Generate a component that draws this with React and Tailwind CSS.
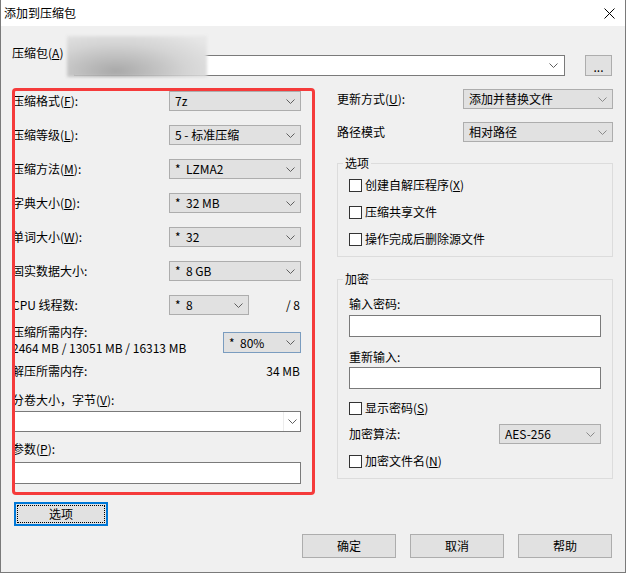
import React from "react";

const Chevron = ({ color = "#5f5f5f" }) => (
  <svg width="9" height="5" viewBox="0 0 9 5" className="shrink-0">
    <path d="M0.5 0.5 L4.5 4.5 L8.5 0.5" fill="none" stroke={color} strokeWidth="1" />
  </svg>
);

const Select = ({ children, className = "", border = "border-[#adadad]", chev }) => (
  <div
    className={`flex items-center justify-between h-[20px] border ${border} bg-[#e1e1e1] pl-[5px] pr-[5px] ${className}`}
  >
    <span className="whitespace-pre">{children}</span>
    <Chevron color={chev} />
  </div>
);

const Acc = ({ k }) => (
  <>
    (<span className="underline">{k}</span>)
  </>
);

const Check = ({ children }) => (
  <div className="flex items-center gap-[3px] h-[16px]">
    <div className="w-[13px] h-[13px] border border-[#333333] bg-white shrink-0" />
    <span>{children}</span>
  </div>
);

const Row = ({ label, children }) => (
  <div className="flex items-center justify-between h-[20px]">
    <span className="whitespace-pre">{label}</span>
    {children}
  </div>
);

const Btn = ({ children }) => (
  <div className="w-[94px] h-[24px] border border-[#adadad] bg-[#e1e1e1] flex items-center justify-center">
    {children}
  </div>
);

export default function App() {
  return (
    <div className="relative w-[626px] h-[573px] bg-[#f0f0f0] border-x border-b border-[#7a7a7a] font-['Noto_Sans_CJK_SC',sans-serif] text-[12px] leading-[16px] text-black overflow-hidden">
      {/* Title bar */}
      <div className="h-[26px] bg-white flex items-center justify-between pl-[3px] pr-[10px]">
        <span className="text-[12px]">添加到压缩包</span>
        <svg width="11" height="11" viewBox="0 0 11 11">
          <path d="M0.5 0.5 L10.5 10.5 M10.5 0.5 L0.5 10.5" stroke="#000" strokeWidth="1" />
        </svg>
      </div>

      <div className="pl-[11px] pr-[12px]">
        {/* Archive row */}
        <div className="flex items-start mt-[19px]">
          <span className="w-[62px] shrink-0">
            压缩包<Acc k="A" />
          </span>
          <div className="flex-1 mt-[10px] h-[21px] bg-white border border-[#7a7a7a] flex items-center justify-end pr-[6px]">
            <Chevron />
          </div>
          <div className="ml-[20px] mr-[1px] mt-[10px] w-[27px] h-[21px] border border-[#adadad] bg-[#e1e1e1] flex items-end justify-center pb-[3px] leading-[10px]">
            ...
          </div>
        </div>

        {/* Columns */}
        <div className="flex mt-[13px] gap-[36px]">
          {/* Left column */}
          <div className="w-[289px] flex flex-col pt-[2px] shrink-0">
            <div className="flex flex-col gap-[14px]">
              <Row label={<>压缩格式<Acc k="F" />:</>}>
                <Select className="w-[132px]">7z</Select>
              </Row>
              <Row label={<>压缩等级<Acc k="L" />:</>}>
                <Select className="w-[132px]">5 - 标准压缩</Select>
              </Row>
              <Row label={<>压缩方法<Acc k="M" />:</>}>
                <Select className="w-[132px]">{"*  LZMA2"}</Select>
              </Row>
              <Row label={<>字典大小<Acc k="D" />:</>}>
                <Select className="w-[132px]">{"*  32 MB"}</Select>
              </Row>
              <Row label={<>单词大小<Acc k="W" />:</>}>
                <Select className="w-[132px]">{"*  32"}</Select>
              </Row>
              <Row label="固实数据大小:">
                <Select className="w-[132px]">{"*  8 GB"}</Select>
              </Row>
              <div className="flex items-center h-[20px]">
                <span className="w-[157px] shrink-0">CPU 线程数:</span>
                <Select className="w-[80px]">{"*  8"}</Select>
                <span className="ml-auto pr-[1px]">/ 8</span>
              </div>
            </div>

            <div className="flex items-start justify-between mt-[9px]">
              <div className="leading-[16px]">
                <div>压缩所需内存:</div>
                <div>2464 MB / 13051 MB / 16313 MB</div>
              </div>
              <Select className="w-[78px] h-[21px] mt-[8px]" border="border-[#7a9cbf]">
                {"*  80%"}
              </Select>
            </div>

            <div className="flex items-center justify-between mt-[7px] h-[16px]">
              <span>解压所需内存:</span>
              <span className="pr-[1px]">34 MB</span>
            </div>

            <div className="mt-[13px]">
              分卷大小，字节<Acc k="V" />:
            </div>
            <div className="mt-[3px] h-[21px] bg-white border border-[#7a7a7a] flex justify-end">
              <div className="w-[17px] border-l border-[#ececec] flex items-center justify-center">
                <Chevron />
              </div>
            </div>

            <div className="mt-[9px]">
              参数<Acc k="P" />:
            </div>
            <div className="mt-[5px] h-[22px] bg-white border border-[#7a7a7a]" />

            <div className="mt-[18px] ml-[2px] w-[94px] h-[24px] border-2 border-[#0078d7] bg-[#e1e1e1] p-[1px]">
              <div className="w-full h-full border border-dotted border-black flex items-center justify-center">
                选项
              </div>
            </div>
          </div>

          {/* Right column */}
          <div className="w-[276px] flex flex-col">
            <Row label={<>更新方式<Acc k="U" />:</>}>
              <Select className="w-[150px]" chev="#8a8a8a">添加并替换文件</Select>
            </Row>
            <div className="mt-[13px]">
              <Row label="路径模式">
                <Select className="w-[150px]" chev="#8a8a8a">相对路径</Select>
              </Row>
            </div>

            <fieldset className="mt-[13px] border border-[#dcdcdc] pb-[9px]">
              <legend className="ml-[5px] px-[2px] leading-[16px]">选项</legend>
              <div className="px-[11px] mt-[6px] flex flex-col gap-[11px]">
                <Check>
                  创建自解压程序<Acc k="X" />
                </Check>
                <Check>压缩共享文件</Check>
                <Check>操作完成后删除源文件</Check>
              </div>
            </fieldset>

            <fieldset className="mt-[14px] border border-[#dcdcdc] pb-[9px]">
              <legend className="ml-[5px] px-[2px] leading-[16px]">加密</legend>
              <div className="px-[11px] flex flex-col">
                <div className="mt-[9px]">输入密码:</div>
                <div className="mt-[3px] h-[22px] bg-white border border-[#7a7a7a]" />
                <div className="mt-[12px]">重新输入:</div>
                <div className="mt-[2px] h-[22px] bg-white border border-[#7a7a7a]" />
                <div className="mt-[11px]">
                  <Check>
                    显示密码<Acc k="S" />
                  </Check>
                </div>
                <div className="mt-[8px]">
                  <Row label="加密算法:">
                    <Select className="w-[102px]" chev="#8a8a8a">AES-256</Select>
                  </Row>
                </div>
                <div className="mt-[9px]">
                  <Check>
                    加密文件名<Acc k="N" />
                  </Check>
                </div>
              </div>
            </fieldset>
          </div>
        </div>

        {/* Bottom buttons */}
        <div className="flex justify-end gap-[14px] mt-[8px] mr-[1px]">
          <Btn>确定</Btn>
          <Btn>取消</Btn>
          <Btn>帮助</Btn>
        </div>
      </div>

      {/* Blurred path overlay */}
      <div className="absolute left-[66px] top-[36px] w-[140px] h-[41px] bg-[radial-gradient(ellipse_at_35%_85%,#a9a9a9,#d4d4d4_55%,#e6e6e6_90%)] blur-[1.5px] pointer-events-none" />

      {/* Red annotation box */}
      <div className="absolute left-[11px] top-[88px] w-[303px] h-[407px] border-[3px] border-[#f53b3b] rounded-[4px] pointer-events-none" />
    </div>
  );
}
